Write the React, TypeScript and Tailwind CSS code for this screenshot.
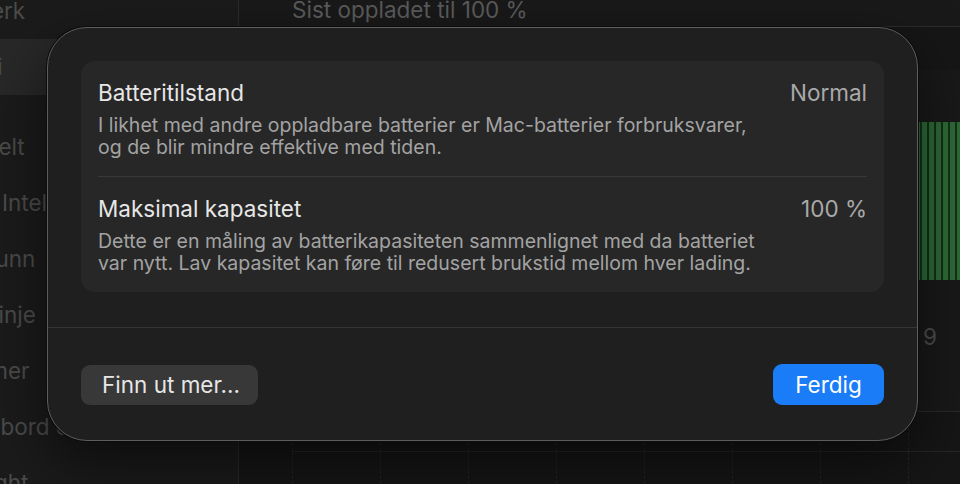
const sidebarTop = ["Nettverk", "Batteri"];
const sidebarRest = [
  "Generelt",
  "Apple Intelligence & Siri",
  "Bakgrunn",
  "Menylinje",
  "Skjermer",
  "Skrivebord og Dock",
  "Spotlight",
];

const columns = ["12", "15", "18", "21", "0", "3", "6", "9"];

const SidebarItem = ({ label, selected }: { label: string; selected?: boolean }) => (
  <div
    className={`h-[56px] shrink-0 flex items-center mr-[10px] rounded-r-[10px] ${
      selected ? "bg-[#282828]" : ""
    }`}
  >
    <span className="-ml-[66px] whitespace-nowrap text-[22.5px] leading-[26px] text-[#4b4b4b]">
      {label}
    </span>
  </div>
);

const Background = () => (
  <div className="flex h-full w-full">
    <aside className="w-[239px] shrink-0 bg-[#1b1b1b] border-r border-[#2b2b2b] flex flex-col -mt-[17px]">
      {sidebarTop.map((l) => (
        <SidebarItem key={l} label={l} selected={l === "Batteri"} />
      ))}
      <div className="h-[24px] shrink-0" />
      {sidebarRest.map((l) => (
        <SidebarItem key={l} label={l} />
      ))}
    </aside>

    <main className="flex-1 flex flex-col bg-[#161616]">
      <div className="h-[27px] shrink-0 border-b border-[#2c2c2c] bg-[#191919] pl-[53px]">
        <span className="block -mt-[3px] text-[22.5px] leading-[26px] text-[#5b5b5b] whitespace-nowrap">
          Sist oppladet til 100 %
        </span>
      </div>

      {/* usage chart */}
      <div className="mt-[43px] ml-[53px] h-[342px] shrink-0 flex flex-col bg-[#191919] border-b border-[#2a2a2a]">
        <div className="flex h-[52px]">
          {columns.map((c) => (
            <div key={c} className="w-[88px] shrink-0 border-l border-dashed border-[#262626]" />
          ))}
        </div>
        <div className="h-[158px] flex gap-[2px] overflow-hidden bg-[#14301a]">
          {Array.from({ length: 110 }).map((_, i) => (
            <div key={i} className="w-[5px] shrink-0 bg-[#2e6b36]" />
          ))}
        </div>
        <div className="flex h-[114px]">
          {columns.map((c) => (
            <div key={c} className="w-[88px] shrink-0 border-l border-dashed border-[#262626]">
              <span className="block mt-[44px] ml-[14px] text-[22.5px] leading-[26px] text-[#4e4e4e]">
                {c}
              </span>
            </div>
          ))}
        </div>
      </div>

      <div className="ml-[53px] flex flex-col flex-1">
        <div className="flex h-[40px] border-b border-[#272727]">
          {columns.map((c) => (
            <div key={c} className="w-[88px] shrink-0 border-l border-dashed border-[#242424]" />
          ))}
        </div>
        <div className="flex flex-1">
          {columns.map((c) => (
            <div key={c} className="w-[88px] shrink-0 border-l border-dashed border-[#242424]" />
          ))}
        </div>
      </div>
    </main>
  </div>
);

const Row = ({
  title,
  value,
  lines,
}: {
  title: string;
  value: string;
  lines: string[];
}) => (
  <div className="pt-[19px] pb-[18px] flex justify-between">
    <div>
      <div className="text-[22.5px] leading-[26px] text-[#e6e6e6]">{title}</div>
      <div className="mt-[8px] text-[19.5px] leading-[22px] text-[#a3a3a3]">
        {lines.map((l) => (
          <div key={l} className="whitespace-nowrap">
            {l}
          </div>
        ))}
      </div>
    </div>
    <div className="text-[22.5px] leading-[26px] text-[#a9a9a9]">{value}</div>
  </div>
);

const BatteryDialog = () => (
  <div className="absolute left-[47px] top-[27px] w-[871px] h-[414px] rounded-[40px] bg-[#1f1f1f] border border-[#5d5d5d] shadow-[0_0_0_1px_#0c0c0c,0_24px_60px_rgba(0,0,0,0.55)] flex flex-col overflow-hidden">
    <div className="pt-[33px] px-[33px]">
      <div className="rounded-[14px] bg-[#272727] px-[17px]">
        <Row
          title="Batteritilstand"
          value="Normal"
          lines={[
            "I likhet med andre oppladbare batterier er Mac-batterier forbruksvarer,",
            "og de blir mindre effektive med tiden.",
          ]}
        />
        <div className="h-px bg-[#383838]" />
        <Row
          title="Maksimal kapasitet"
          value="100 %"
          lines={[
            "Dette er en måling av batterikapasiteten sammenlignet med da batteriet",
            "var nytt. Lav kapasitet kan føre til redusert brukstid mellom hver lading.",
          ]}
        />
      </div>
    </div>
    <div className="mt-[35px] h-px bg-[#353535]" />
    <div className="pt-[37px] px-[33px] flex justify-between items-start">
      <button className="w-[177px] h-[40px] rounded-[9px] bg-[#383838] pl-[21px] text-left text-[22.5px] text-[#e6e6e6]">
        Finn ut mer...
      </button>
      <button className="w-[111px] h-[41px] -mt-px rounded-[9px] bg-[#1a7cf6] text-[22.5px] text-white">
        Ferdig
      </button>
    </div>
  </div>
);

export default function App() {
  return (
    <div className="relative w-[960px] h-[484px] overflow-hidden bg-[#161616] font-['Inter',sans-serif] antialiased">
      <Background />
      <BatteryDialog />
    </div>
  );
}
